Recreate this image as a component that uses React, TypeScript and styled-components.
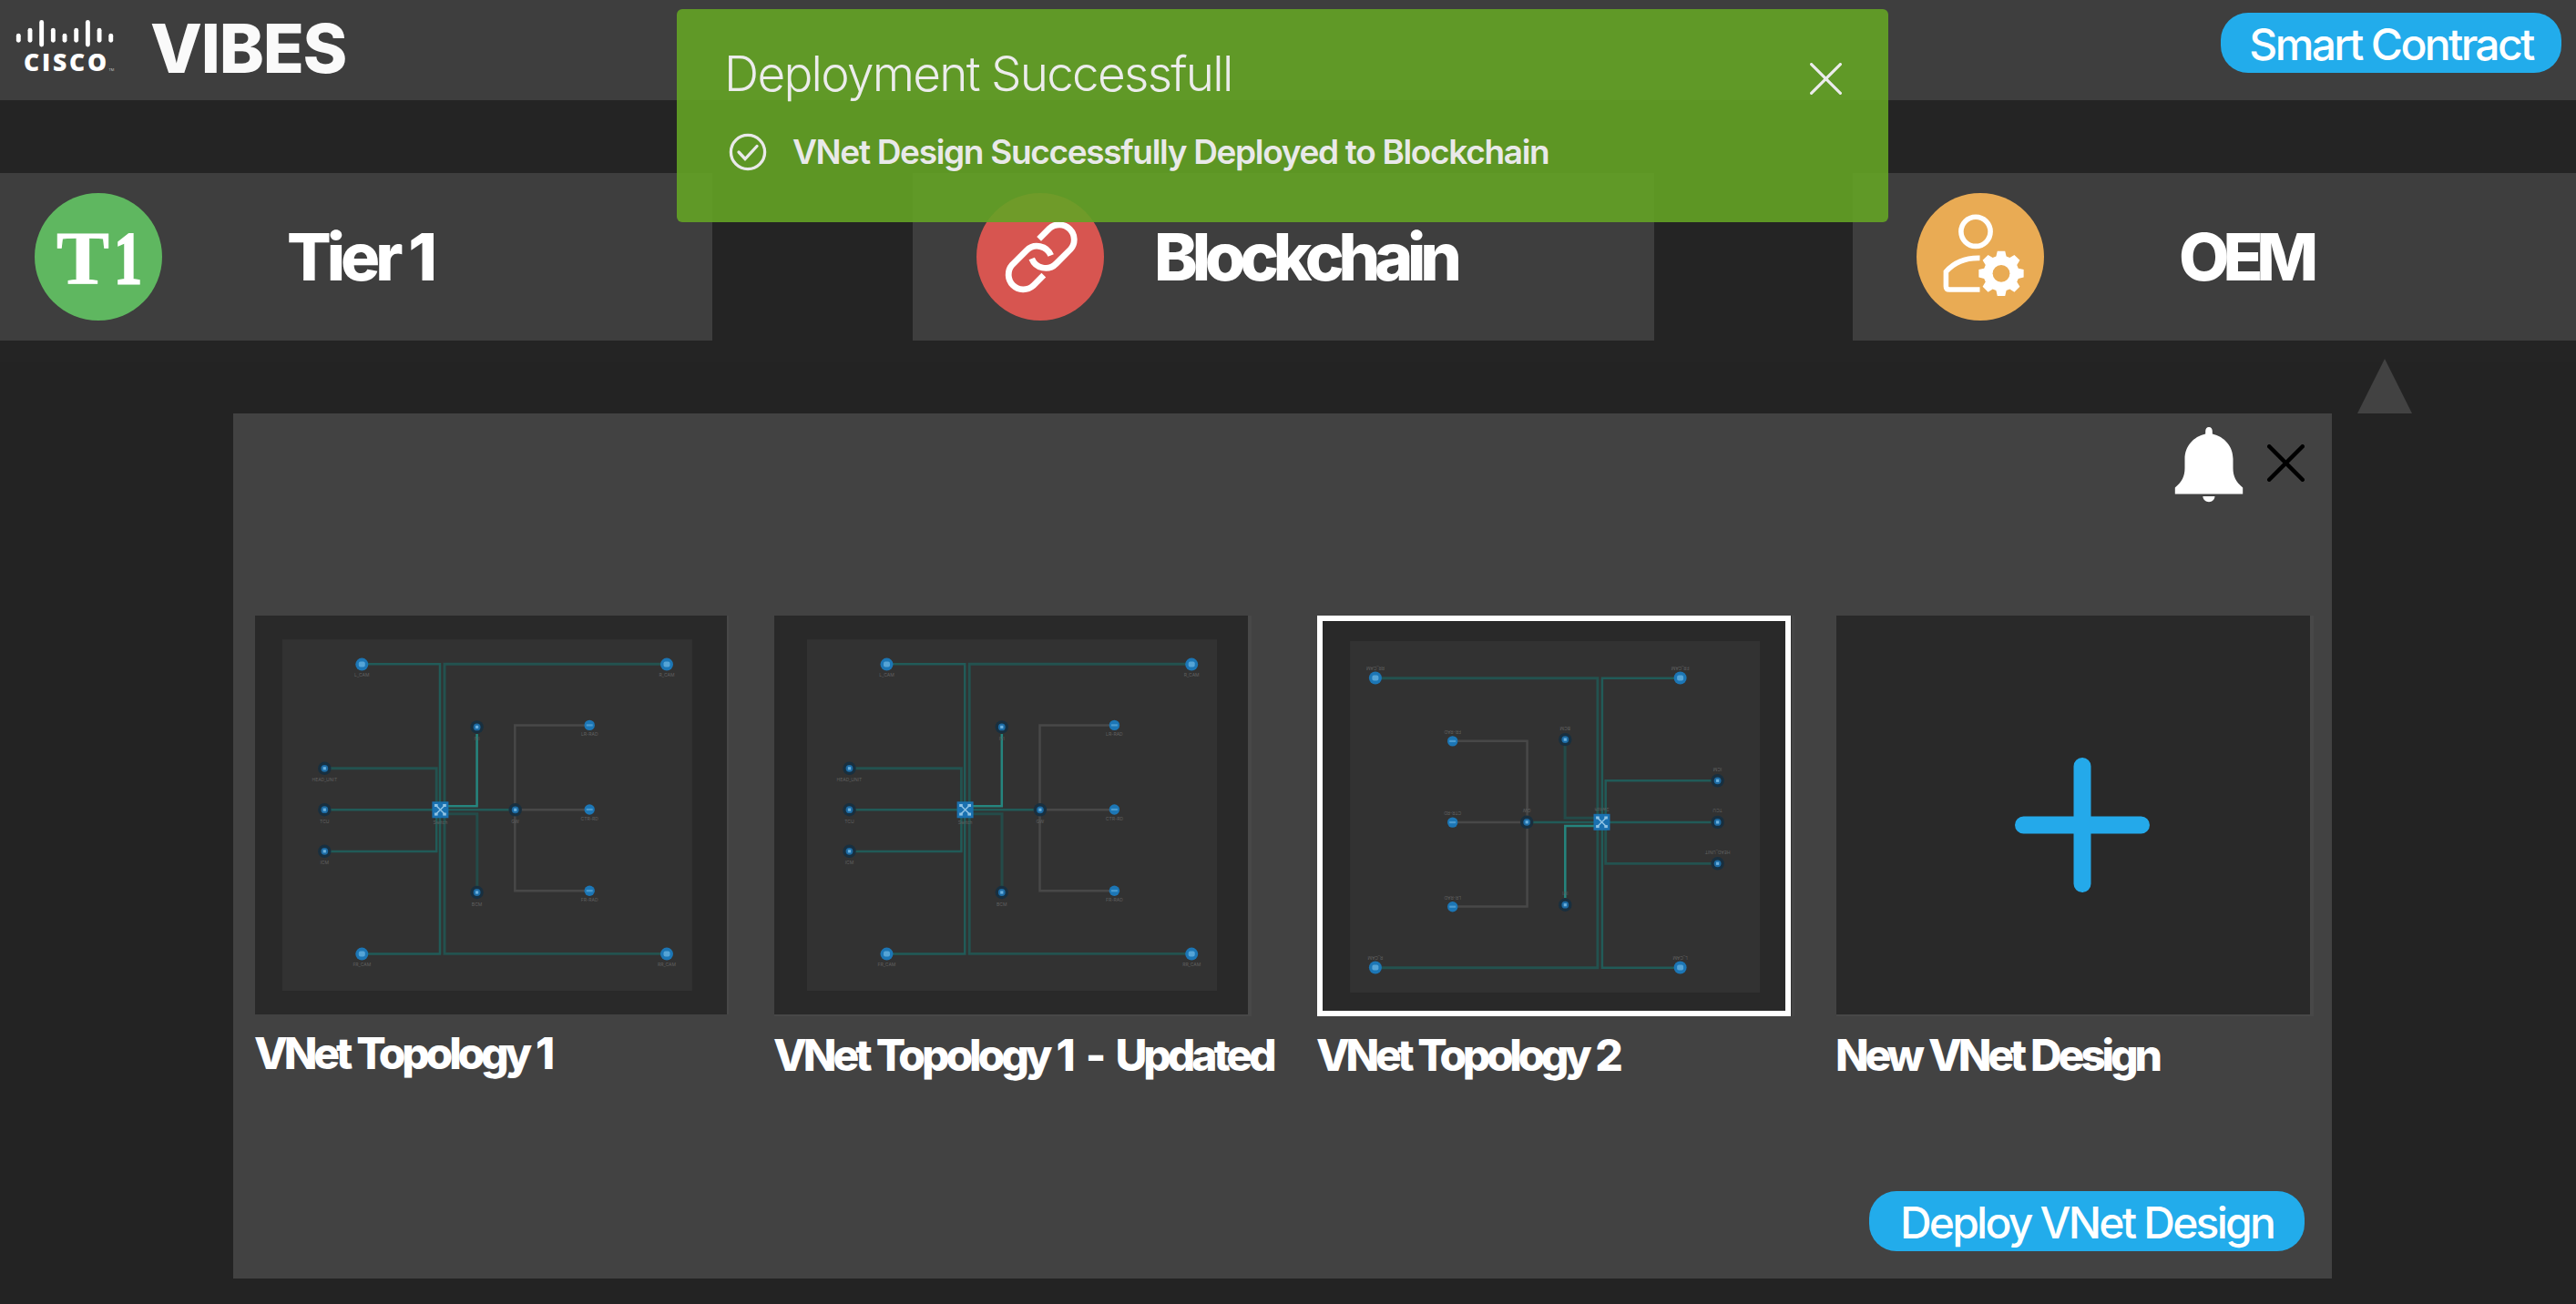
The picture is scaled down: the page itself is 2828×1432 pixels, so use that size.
import React from 'react';
import styled, { createGlobalStyle } from 'styled-components';

const GlobalStyle = createGlobalStyle`
  *, *::before, *::after { box-sizing: border-box; }
  body {
    margin: 0;
    background: #232323;
    font-family: Inter, "Liberation Sans", sans-serif;
    color: #fff;
  }
  h1, h2, h3, p { margin: 0; }
  button { border: 0; padding: 0; background: none; font-family: inherit; color: inherit; cursor: pointer; }
  svg { display: block; flex: none; }
`;

const Page = styled.div`
  position: relative;
  width: 2828px;
  height: 1432px;
  display: flex;
  flex-direction: column;
  overflow: hidden;
`;

const Header = styled.header`
  height: 110px;
  background: #3e3e3e;
  display: flex;
  align-items: flex-start;
  padding: 14px 16px 0 12px;
`;

const Brand = styled.div`
  flex: 1;
  display: flex;
  align-items: flex-start;
  gap: 34px;
`;

const BrandName = styled.h1`
  font-size: 74px;
  line-height: 80px;
  margin-top: -1px;
  font-weight: 800;
  letter-spacing: -1.2px;
  color: #fafafa;
`;

const PillButton = styled.button<{ $width: number; $spacing: number }>`
  width: ${(p) => p.$width}px;
  height: 66px;
  border-radius: 30px;
  background: #22aceb;
  color: #fff;
  font-size: 48px;
  line-height: 62px;
  padding-top: 4px;
  font-weight: 500;
  letter-spacing: ${(p) => p.$spacing}px;
  white-space: nowrap;
`;

const Tiers = styled.nav`
  display: grid;
  grid-template-columns: 784px 814px 794px;
  justify-content: space-between;
  padding-top: 80px;
  height: 288px;
  background: #242424;
`;

const Tier = styled.section<{ $indent: number; $gap: number }>`
  height: 184px;
  background: #3e3e3e;
  display: flex;
  align-items: center;
  padding-left: ${(p) => p.$indent}px;
  gap: ${(p) => p.$gap}px;

  &:first-child { margin-right: 2px; }
`;

const TierBadge = styled.div<{ $color: string }>`
  flex: none;
  width: 140px;
  height: 140px;
  border-radius: 50%;
  background: ${(p) => p.$color};
  display: flex;
  align-items: center;
  justify-content: center;
`;

const Monogram = styled.span`
  display: flex;
  font: 700 82px/82px "Liberation Serif", serif;
  padding: 4px 0 0 3px;
`;

const MonogramLetter = styled.span`
  transform: scaleX(1.06);
  transform-origin: left;
  -webkit-text-stroke: 1px #fff;
`;

const MonogramDigit = styled.span`
  transform: scaleX(0.76);
  transform-origin: 92% 50%;
  -webkit-text-stroke: 2px #fff;
`;

const TierName = styled.h2<{ $spacing: number }>`
  font-size: 72px;
  line-height: 88px;
  font-weight: 800;
  letter-spacing: ${(p) => p.$spacing}px;
`;

const Pointer = styled.div`
  align-self: flex-end;
  margin: -4px 180px 0 0;
  width: 60px;
  height: 60px;
  background: #424242;
  clip-path: polygon(50% 0, 100% 100%, 0 100%);
`;

const Panel = styled.main`
  width: 2304px;
  height: 950px;
  margin-left: 256px;
  background: #424242;
  display: flex;
  flex-direction: column;
`;

const PanelTools = styled.div`
  height: 222px;
  display: flex;
  justify-content: flex-end;
  align-items: flex-start;
  gap: 26px;
  padding: 14px 30px 0 0;
`;

const IconButton = styled.button<{ $top?: number }>`
  margin-top: ${(p) => p.$top ?? 0}px;
`;

const Designs = styled.div`
  flex: 1;
  display: flex;
  align-items: flex-start;
  gap: 50px;
  padding-left: 24px;
`;

const Design = styled.article<{ $width: number }>`
  flex: none;
  width: ${(p) => p.$width}px;
  display: flex;
  flex-direction: column;
  gap: 14px;
`;

const Thumb = styled.div<{ $edge?: boolean; $selected?: boolean }>`
  width: ${(p) => (p.$edge ? 524 : 520)}px;
  height: ${(p) => (p.$edge || p.$selected ? 440 : 438)}px;
  background: #292929;
  border-style: solid;
  border-color: ${(p) => (p.$selected ? '#fff' : '#484848')};
  border-width: ${(p) => (p.$selected ? '6px' : p.$edge ? '0 4px 2px 0' : '0 2px 0 0')};
  box-shadow: ${(p) => (p.$selected ? '1px 0 #303030, 4px 0 #464646' : 'none')};
  display: flex;
  align-items: center;
  justify-content: center;
  overflow: hidden;
`;

const PlusSlot = styled.div`
  padding: 21px 0 0 19px;
`;

const DesignName = styled.h3<{ $spacing: number }>`
  font-size: 48px;
  line-height: 58px;
  margin-left: -1px;
  font-weight: 800;
  letter-spacing: ${(p) => p.$spacing}px;
  word-spacing: 1.8px;
  white-space: nowrap;
`;

const Dash = styled.span`
  margin: 0 6px 0 7px;
`;

const PanelFooter = styled.footer`
  display: flex;
  justify-content: flex-end;
  padding: 0 30px 30px 0;
`;

const Toast = styled.aside`
  position: absolute;
  top: 10px;
  left: 743px;
  width: 1330px;
  height: 234px;
  border-radius: 6px;
  background: #64a325;
  opacity: 0.9;
  padding: 39px 51px 0 52px;
  display: flex;
  justify-content: space-between;
  align-items: flex-start;
`;

const ToastBody = styled.div`
  display: flex;
  flex-direction: column;
  gap: 31px;
`;

const ToastTitle = styled.h2`
  font-size: 53px;
  line-height: 64px;
  font-weight: 300;
  letter-spacing: -1.72px;
`;

const ToastMessage = styled.div`
  display: flex;
  align-items: center;
  gap: 28px;
  padding-left: 5px;
  font-size: 37px;
  line-height: 44px;
  font-weight: 600;
  letter-spacing: -1.32px;
`;

const MessageText = styled.p`
  padding-top: 1px;
`;

const NodeLabel = styled.text`
  font: 5px Inter, sans-serif;
  fill: #606060;
  text-anchor: middle;
`;

const Wordmark = styled.text`
  font: 800 26.5px "Open Sans", sans-serif;
  fill: #fff;
`;

const Trademark = styled.text`
  font: 4px "Open Sans", sans-serif;
  fill: #ccc;
`;

const barHeights = ['s', 'm', 'l', 'm', 's', 'm', 'l', 'm', 's'] as const;
const barSpan = { s: [39.2, 44.3], m: [33.2, 44.3], l: [24.4, 49] };

function CiscoLogo() {
  return (
    <svg width="119" height="76" viewBox="12 14 119 76">
      {barHeights.map((h, i) => (
        <line
          key={i}
          x1={20.3 + i * 12.68}
          x2={20.3 + i * 12.68}
          y1={barSpan[h][0]}
          y2={barSpan[h][1]}
          stroke="#fff"
          strokeWidth="4.9"
          strokeLinecap="round"
        />
      ))}
      <Wordmark x="26" y="78" textLength="91">CISCO</Wordmark>
      <Trademark x="119.5" y="78">TM</Trademark>
    </svg>
  );
}

function LinkIcon() {
  const half = 'M60.7 72A16.3 16.3 0 0 0 87.5 77.5L103.2 61.8A16.3 16.3 0 0 0 80.2 38.8L68.6 50.4';
  return (
    <svg width="140" height="140" fill="none" stroke="#fff" strokeWidth="6.8">
      <path d={half} />
      <path d={half} transform="rotate(180 71.2 70.3)" />
    </svg>
  );
}

function gearPath(cx: number, cy: number) {
  const pts: string[] = [];
  for (let i = 0; i < 8; i++) {
    const a = (i * Math.PI) / 4;
    const corners: [number, number][] = [
      [19.6, -0.29], [25, -0.17], [25, 0.17], [19.6, 0.29],
    ];
    corners.forEach(([r, d]) => {
      pts.push(`${(cx + r * Math.sin(a + d)).toFixed(2)} ${(cy - r * Math.cos(a + d)).toFixed(2)}`);
    });
  }
  return `M${pts.join('L')}Z`;
}

function UserGearIcon() {
  return (
    <svg width="140" height="140" fill="none" stroke="#fff" strokeWidth="5.6">
      <circle cx="65" cy="42.3" r="16.1" />
      <path d="M69.5 71.4C54 71 42 75.5 32.4 86.3V102.5Q32.4 106 36 106H69.5" />
      <path d={gearPath(93, 88.3)} fill="#fff" stroke="none" />
      <circle cx="93" cy="88.3" r="9.4" fill="#e9ab54" stroke="none" />
    </svg>
  );
}

function BellIcon() {
  return (
    <svg width="76" height="84" viewBox="2387 468 76 84" fill="#fff">
      <path d="M2425 468C2422.6 468 2421.2 470 2421.2 472.5V475.5C2408 478.5 2398.5 489 2398.5 503V513C2398.5 522 2395.5 528 2387.8 534.5V541.6H2462.2V534.5C2454.5 528 2451.5 522 2451.5 513V503C2451.5 489 2442 478.5 2428.8 475.5V472.5C2428.8 470 2427.4 468 2425 468Z" />
      <path d="M2418.3 544H2431.5C2431 548 2428.5 550.2 2425 550.2S2418.8 548 2418.3 544Z" />
    </svg>
  );
}

function CrossIcon({ size, weight, color }: { size: number; weight: number; color: string }) {
  const a = weight / 2;
  const b = size - a;
  return (
    <svg width={size} height={size} stroke={color} strokeWidth={weight} strokeLinecap="round">
      <path d={`M${a} ${a}L${b} ${b}M${b} ${a}L${a} ${b}`} />
    </svg>
  );
}

function CheckCircleIcon() {
  return (
    <svg width="42" height="42" viewBox="0 0 42 42" fill="none" stroke="#fff" strokeWidth="3.3" strokeLinecap="round">
      <circle cx="21" cy="21" r="18.6" />
      <path d="M11 21L18 28.5L31 14.5" />
    </svg>
  );
}

function PlusIcon() {
  return (
    <svg width="150" height="150" stroke="#24a9ea" strokeWidth="19" strokeLinecap="round">
      <path d="M75 10.5V139.5M10.5 75H139.5" />
    </svg>
  );
}

const cameras: [number, number, string][] = [
  [117.3, 53.6, 'L_CAM'], [452, 53.6, 'R_CAM'], [117.3, 371.6, 'FR_CAM'], [452, 371.6, 'RR_CAM'],
];
const sensors: [number, number, string][] = [
  [367.2, 120.4, 'LR-RAD'], [367.2, 213, 'CTR-RD'], [367.2, 302.2, 'FR-RAD'],
];
const units: [number, number, string][] = [
  [76.3, 167.8, 'HEAD_UNIT'], [76.3, 213.2, 'TCU'], [76.3, 258.8, 'ICM'],
  [243.6, 122.4, 'IVI'], [243.6, 304, 'BCM'], [285.7, 213.3, 'GW'],
];

function Topology({ shift = 0, flipped = false }: { shift?: number; flipped?: boolean }) {
  const transform = flipped ? 'translate(509.9 434.1) rotate(180)' : `translate(${shift} 0)`;
  const width = flipped ? 508 : 518;
  const height = flipped ? 428 : 438;
  return (
    <svg width={width} height={height} fill="none">
      <g transform={transform}>
        <rect x="29.8" y="26.2" width="450" height="385.8" fill="#323232" />
        <g stroke="#484848" strokeWidth="2.5">
          <path d="M367 120.6H285.3V302.3H367M285 213.2H367" />
        </g>
        <g stroke="#215b58" strokeWidth="2.5">
          <path d="M117 53.3H203V371.4H117M76 213.2H285M76 258.9H199.2V213" />
          <path d="M452 53.3H208V371.4H452M76 167.7H199.2V213" stroke="#23524f" strokeWidth="2.9" />
          <path d="M203 217.8H243.8V304" stroke="#244b49" strokeWidth="3" />
          <path d="M203 209.2H243.6V130" stroke="#25857e" />
        </g>
        {cameras.map(([x, y, label]) => (
          <g key={label}>
            <circle cx={x} cy={y} r="7" fill="#1c76b5" />
            <rect x={x - 3.5} y={y - 3} width="7" height="6" rx="2" fill="#55a4d6" />
            <NodeLabel x={x} y={y + 13}>{label}</NodeLabel>
          </g>
        ))}
        {sensors.map(([x, y, label]) => (
          <g key={label}>
            <circle cx={x} cy={y} r="5.7" fill="#1c76b5" />
            <rect x={x - 3.5} y={y - 1.1} width="7" height="2.2" fill="#4a9bd0" />
            <NodeLabel x={x} y={y + 12}>{label}</NodeLabel>
          </g>
        ))}
        {units.map(([x, y, label]) => (
          <g key={label}>
            <circle cx={x} cy={y} r="7.2" fill="#182f3f" />
            <circle cx={x} cy={y} r="3.9" fill="#1c6aa3" />
            <rect x={x - 1.6} y={y - 1.6} width="3.2" height="3.2" fill="#6ab0de" />
            <NodeLabel x={x} y={y + 14.5}>{label}</NodeLabel>
          </g>
        ))}
        <rect x="194.4" y="204.3" width="18" height="18" fill="#1a71b0" />
        <path d="M198.9 208.8L207.9 217.8M207.9 208.8L198.9 217.8" stroke="#8fc3e4" strokeWidth="1.5" />
        <g fill="#8fc3e4">
          <rect x="197" y="207" width="3.6" height="3" />
          <rect x="206.2" y="207" width="3.6" height="3" />
          <rect x="197" y="216.6" width="3.6" height="3" />
          <rect x="206.2" y="216.6" width="3.6" height="3" />
        </g>
        <NodeLabel x="203.4" y="229">Switch</NodeLabel>
      </g>
    </svg>
  );
}

export default function App() {
  return (
    <>
      <GlobalStyle />
      <Page>
        <Header>
          <Brand>
            <CiscoLogo />
            <BrandName>VIBES</BrandName>
          </Brand>
          <PillButton $width={374} $spacing={-2.65}>Smart Contract</PillButton>
        </Header>

        <Tiers>
          <Tier $indent={38} $gap={137}>
            <TierBadge $color="#5fb760">
              <Monogram>
                <MonogramLetter>T</MonogramLetter>
                <MonogramDigit>1</MonogramDigit>
              </Monogram>
            </TierBadge>
            <TierName $spacing={-5}>Tier 1</TierName>
          </Tier>
          <Tier $indent={70} $gap={55}>
            <TierBadge $color="#d75550"><LinkIcon /></TierBadge>
            <TierName $spacing={-6.2}>Blockchain</TierName>
          </Tier>
          <Tier $indent={70} $gap={148}>
            <TierBadge $color="#e9ab54"><UserGearIcon /></TierBadge>
            <TierName $spacing={-7.2}>OEM</TierName>
          </Tier>
        </Tiers>

        <Pointer />
        <Panel>
          <PanelTools>
            <IconButton aria-label="Notifications" $top={1}><BellIcon /></IconButton>
            <IconButton aria-label="Close panel" $top={20}>
              <CrossIcon size={41} weight={4.5} color="#000" />
            </IconButton>
          </PanelTools>
          <Designs>
            <Design $width={520}>
              <Thumb><Topology /></Thumb>
              <DesignName $spacing={-4.2}>VNet Topology 1</DesignName>
            </Design>
            <Design $width={546}>
              <Thumb $edge><Topology shift={5.2} /></Thumb>
              <DesignName $spacing={-4.1}>VNet Topology 1 <Dash>-</Dash> Updated</DesignName>
            </Design>
            <Design $width={520}>
              <Thumb $selected><Topology flipped /></Thumb>
              <DesignName $spacing={-4.4}>VNet Topology 2</DesignName>
            </Design>
            <Design $width={524}>
              <Thumb $edge><PlusSlot><PlusIcon /></PlusSlot></Thumb>
              <DesignName $spacing={-4.2}>New VNet Design</DesignName>
            </Design>
          </Designs>
          <PanelFooter>
            <PillButton $width={478} $spacing={-2.78}>Deploy VNet Design</PillButton>
          </PanelFooter>
        </Panel>

        <Toast role="status">
          <ToastBody>
            <ToastTitle>Deployment Successfull</ToastTitle>
            <ToastMessage>
              <CheckCircleIcon />
              <MessageText>VNet Design Successfully Deployed to Blockchain</MessageText>
            </ToastMessage>
          </ToastBody>
          <IconButton aria-label="Dismiss" $top={20}>
            <CrossIcon size={35} weight={3.2} color="#fff" />
          </IconButton>
        </Toast>
      </Page>
    </>
  );
}
